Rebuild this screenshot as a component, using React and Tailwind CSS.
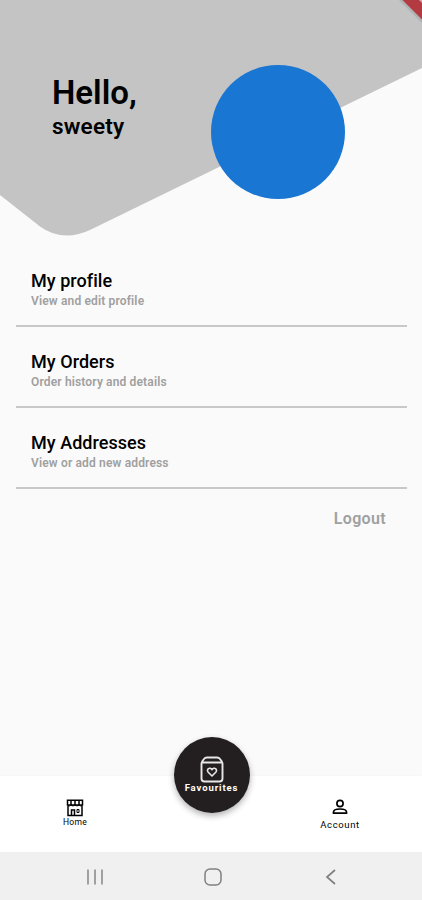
const menu = [
  { title: "My profile", text: "View and edit profile" },
  { title: "My Orders", text: "Order history and details" },
  { title: "My Addresses", text: "View or add new address" },
]

function Header() {
  return <header className="relative h-[256px] shrink-0 overflow-hidden">
    <svg className="absolute inset-0" width="422" height="256" viewBox="0 0 422 256" fill="none">
      <path d="M0 0H422V68L91 229.500Q63 243 40 226.500L0 195Z" fill="#c4c4c4" />
      <path d="M399 -2L424 23" stroke="#8f9a98" strokeWidth="3" opacity="0.4" />
      <path d="M401.500 -1H422V19.500Z" fill="#b23a40" />
      <path d="M419 0H422V3Z" fill="#d3a5a8" />
    </svg>
    <div className="relative flex pl-[52px] pt-[65px]">
      <div className="w-[159px] pt-[9px]">
        <h1 className="text-[33px] leading-[38px] font-semibold">Hello,</h1>
        <p className="text-[22.500px] leading-[28px] font-semibold tracking-[0.200px]">sweety</p>
      </div>
      <div className="size-[134px] rounded-full bg-[#1976d2]"></div>
    </div>
  </header>
}

function MenuItem({ item }) {
  return <div className="h-[81px] border-b-2 border-[#c8c8c8] pl-[15px] pt-[24px]">
    <h2 className="text-[18px] leading-[22px] font-medium tracking-[0.050px]">{item.title}</h2>
    <p className="text-[12px] leading-[18px] font-semibold tracking-[0.150px] text-[#a0a0a0]">{item.text}</p>
  </div>
}

function StoreIcon() {
  return <svg width="18" height="18" viewBox="0 0 18 18" fill="none" stroke="#000" strokeWidth="1.500">
    <path d="M1.500 1.200H16.500V6H1.500ZM5 1.200V6M9 1.200V6M13 1.200V6" />
    <path d="M1.500 6Q3.200 8 5 6Q7 8 9 6Q11 8 13 6Q15 8 16.500 6" strokeWidth="1" />
    <path d="M2 7V16.500H16V7M5.500 16.500V11H8.500V16.500" />
    <path d="M11 10.500H13V13.500H11Z" strokeWidth="1" />
  </svg>
}

function UserIcon() {
  return <svg width="16" height="16" viewBox="0 0 16 16" fill="none" stroke="#000" strokeWidth="1.700">
    <circle cx="8" cy="4.500" r="3.100" />
    <path d="M1.500 14.200V13C1.500 11.500 3.500 10 8 10S14.500 11.500 14.500 13V14.200Z" />
  </svg>
}

function BagIcon() {
  return <svg width="24" height="28" viewBox="0 0 24 28" fill="none" stroke="#e8e8e8" strokeWidth="1.900" strokeLinejoin="round">
    <path d="M1.500 8Q1.500 6.500 2.500 5L4 3Q5 1.500 7 1.500H17Q19 1.500 20 3L21.500 5Q22.500 6.500 22.500 8V22.500Q22.500 25.500 19.500 25.500H4.500Q1.500 25.500 1.500 22.500ZM2.500 6.500H21.500" />
    <path d="M12 20L8 16Q6.800 14.200 8.100 12.900Q10.200 11.300 12 13.700Q13.800 11.300 15.900 12.900Q17.200 14.200 16 16Z" strokeWidth="1.600" />
  </svg>
}

function BottomBar() {
  return <nav className="relative h-[76px] shrink-0 bg-white shadow-[0_-1px_3px_rgba(0,0,0,0.02)]">
    <div className="flex justify-between pl-[55px] pr-[62px]">
      <div className="w-[40px] pt-[23px] flex flex-col items-center">
        <StoreIcon />
        <span className="text-[8.500px] leading-[10px] tracking-[0.300px]">Home</span>
      </div>
      <div className="w-[40px] pt-[23px] flex flex-col items-center">
        <UserIcon />
        <span className="mt-[4px] text-[9.500px] leading-[11px] tracking-[0.620px] whitespace-nowrap">Account</span>
      </div>
    </div>
    <div className="absolute left-[173.500px] -top-[39px] size-[76px] rounded-full bg-[#231f20] shadow-[0_3px_6px_rgba(0,0,0,0.3)] flex flex-col items-center pt-[19px] text-white">
      <BagIcon />
      <span className="-mt-[2px] text-[9.500px] leading-[11px] font-bold tracking-[0.900px]">Favourites</span>
    </div>
  </nav>
}

function SystemBar() {
  return <div className="h-[48px] shrink-0 bg-[#f0f0f0] flex items-center justify-between pl-[86px] pr-[85px] pt-[2px]">
    <svg width="18" height="18" viewBox="0 0 18 18" fill="none" stroke="#858585" strokeWidth="1.500">
      <path d="M2 1.500V16.500M9 1.500V16.500M16 1.500V16.500" />
    </svg>
    <svg className="-ml-[3px]" width="18" height="18" viewBox="0 0 18 18" fill="none" stroke="#808080" strokeWidth="1.500">
      <rect x="1" y="1" width="16" height="16" rx="5" />
    </svg>
    <svg width="12" height="18" viewBox="0 0 12 18" fill="none" stroke="#808080" strokeWidth="1.700">
      <path d="M10 2L2 9L10 16" />
    </svg>
  </div>
}

export default function App() {
  return <div className="w-[422px] h-[900px] flex flex-col overflow-hidden bg-[#fafafa] text-black font-[Roboto,sans-serif]">
    <Header />
    <main className="flex-1 pl-[16px] pr-[15px] -mt-[10px]">
      {menu.map((item) => <MenuItem key={item.title} item={item} />)}
      <div className="flex justify-end pr-[21px] pt-[19px]">
        <button className="text-[16px] leading-[22px] font-semibold tracking-[0.350px] text-[#a0a0a0]">Logout</button>
      </div>
    </main>
    <BottomBar />
    <SystemBar />
  </div>
}
